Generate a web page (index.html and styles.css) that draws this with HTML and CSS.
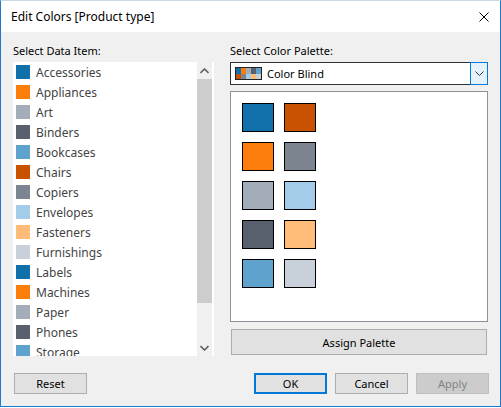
FILE: index.html
```html
<!DOCTYPE html>
<html>
<head>
<meta charset="utf-8">
<link rel="stylesheet" href="styles.css">
</head>
<body>
<div class="window">
  <div class="titlebar">
    <span class="title">Edit Colors [Product type]</span>
    <svg class="close" width="10" height="10" viewBox="0 0 10 10"><path d="M0.5 0.5 L9.5 9.5 M9.5 0.5 L0.5 9.5" stroke="#000" stroke-width="1" fill="none"/></svg>
  </div>
  <div class="content">
    <div class="columns">
      <div class="col-left">
        <div class="label">Select Data Item:</div>
        <div class="listbox">
          <div class="items">
            <div class="item"><span class="sw" style="background:#1170aa"></span>Accessories</div>
            <div class="item"><span class="sw" style="background:#fc7d0b"></span>Appliances</div>
            <div class="item"><span class="sw" style="background:#a3acb9"></span>Art</div>
            <div class="item"><span class="sw" style="background:#57606c"></span>Binders</div>
            <div class="item"><span class="sw" style="background:#5fa2ce"></span>Bookcases</div>
            <div class="item"><span class="sw" style="background:#c85200"></span>Chairs</div>
            <div class="item"><span class="sw" style="background:#7b848f"></span>Copiers</div>
            <div class="item"><span class="sw" style="background:#a3cce9"></span>Envelopes</div>
            <div class="item"><span class="sw" style="background:#ffbc79"></span>Fasteners</div>
            <div class="item"><span class="sw" style="background:#c8d0d9"></span>Furnishings</div>
            <div class="item"><span class="sw" style="background:#1170aa"></span>Labels</div>
            <div class="item"><span class="sw" style="background:#fc7d0b"></span>Machines</div>
            <div class="item"><span class="sw" style="background:#a3acb9"></span>Paper</div>
            <div class="item"><span class="sw" style="background:#57606c"></span>Phones</div>
            <div class="item"><span class="sw" style="background:#5fa2ce"></span>Storage</div>
          </div>
          <div class="scrollbar">
            <div class="sb-btn"><svg width="9" height="6" viewBox="0 0 9 6"><path d="M0.5 5 L4.5 1 L8.5 5" stroke="#606060" stroke-width="1.6" fill="none"/></svg></div>
            <div class="sb-track"><div class="sb-thumb"></div></div>
            <div class="sb-btn"><svg width="9" height="6" viewBox="0 0 9 6"><path d="M0.5 1 L4.5 5 L8.5 1" stroke="#606060" stroke-width="1.6" fill="none"/></svg></div>
          </div>
        </div>
      </div>
      <div class="col-right">
        <div class="label">Select Color Palette:</div>
        <div class="combo">
          <div class="combo-value">
            <div class="mini">
              <span style="background:#1170aa"></span><span style="background:#fc7d0b"></span><span style="background:#a3acb9"></span><span style="background:#57606c"></span><span style="background:#5fa2ce"></span>
              <span style="background:#c85200"></span><span style="background:#7b848f"></span><span style="background:#a3cce9"></span><span style="background:#ffbc79"></span><span style="background:#c8d0d9"></span>
            </div>
            <span class="combo-text">Color Blind</span>
          </div>
          <div class="combo-btn"><svg width="9" height="5" viewBox="0 0 9 5"><path d="M0.5 0.5 L4.5 4.5 L8.5 0.5" stroke="#333" stroke-width="1" fill="none"/></svg></div>
        </div>
        <div class="palette">
          <div class="pgrid">
            <span class="psw" style="background:#1170aa"></span><span class="psw" style="background:#c85200"></span>
            <span class="psw" style="background:#fc7d0b"></span><span class="psw" style="background:#7b848f"></span>
            <span class="psw" style="background:#a3acb9"></span><span class="psw" style="background:#a3cce9"></span>
            <span class="psw" style="background:#57606c"></span><span class="psw" style="background:#ffbc79"></span>
            <span class="psw" style="background:#5fa2ce"></span><span class="psw" style="background:#c8d0d9"></span>
          </div>
        </div>
        <button class="btn assign">Assign Palette</button>
      </div>
    </div>
    <div class="footer">
      <button class="btn reset">Reset</button>
      <div class="right-btns">
        <button class="btn ok">OK</button>
        <button class="btn">Cancel</button>
        <button class="btn disabled">Apply</button>
      </div>
    </div>
  </div>
</div>
</body>
</html>
```

FILE: styles.css
```css
* { box-sizing: border-box; }
html, body { margin: 0; padding: 0; background: #ffffff; }
body { font-family: "Noto Sans", "Open Sans", sans-serif; font-size: 11px; color: #000; }
.window {
  width: 501px; height: 407px;
  border: 1px solid #1c79cf;
  border-top-color: #c9d9ea;
  background: #f0f0f0;
  display: flex; flex-direction: column;
}
.titlebar {
  height: 31px; flex: none;
  background: #ffffff;
  display: flex; align-items: center; justify-content: space-between;
  padding: 0 11px 0 10px;
}
.title { font-size: 12px; line-height: 16px; }
.close { display: block; margin-right: 0; }
.content { flex: 1; display: flex; flex-direction: column; padding: 11px 11px 12px 12px; }
.columns { display: flex; gap: 16px; }
.col-left { width: 201px; display: flex; flex-direction: column; }
.col-right { width: 258px; display: flex; flex-direction: column; }
.label { height: 15px; line-height: 15px; margin-bottom: 4px; }
.listbox { height: 294px; background: #fff; display: flex; overflow: hidden; padding-right: 2px; }
.items { flex: 1; overflow: hidden; }
.item { height: 20px; display: flex; align-items: center; padding-left: 3px; gap: 6px; color: #444; font-size: 12px; white-space: nowrap; }
.sw { width: 14px; height: 14px; flex: none; }
.scrollbar { width: 15px; background: #f0f0f0; display: flex; flex-direction: column; }
.sb-btn { height: 17px; display: flex; align-items: center; justify-content: center; }
.sb-btn svg { display: block; }
.sb-track { flex: 1; }
.sb-thumb { height: 224px; background: #cdcdcd; }
.combo { height: 23px; border: 1px solid #333; background: #fff; display: flex; }
.combo-value { flex: 1; display: flex; align-items: center; padding-left: 4px; gap: 5px; }
.mini { width: 27px; height: 13px; border: 1px solid #222; display: grid; grid-template-columns: repeat(5, 1fr); grid-template-rows: 1fr 1fr; }
.combo-text { font-size: 11px; line-height: 16px; }
.combo-btn { width: 18px; background: #e5f1fb; border: 1px solid #0078d7; margin: -1px -1px -1px 0; display: flex; align-items: center; justify-content: center; }
.combo-btn svg { display: block; }
.palette { margin-top: 6px; height: 231px; border: 1px solid #8d9199; background: #fff; padding: 11px 0 0 11px; }
.pgrid { display: grid; grid-template-columns: 32px 32px; grid-auto-rows: 29px; column-gap: 10px; row-gap: 10px; }
.psw { border: 1px solid #000; display: block; }
.btn {
  font-family: "Noto Sans", "Open Sans", sans-serif; font-size: 11px; color: #000;
  background: #e1e1e1; border: 1px solid #adadad; padding: 0; margin: 0;
  height: 21px; width: 73px; line-height: 17px;
}
.assign { margin: 7px 1px 0 1px; width: auto; height: 26px; }
.footer { margin-top: 17px; display: flex; justify-content: space-between; align-items: center; padding-left: 1px; }
.right-btns { display: flex; gap: 8px; }
.ok { border: 2px solid #0078d7; }
.disabled { background: #cccccc; border-color: #bfbfbf; color: #838383; }
```
